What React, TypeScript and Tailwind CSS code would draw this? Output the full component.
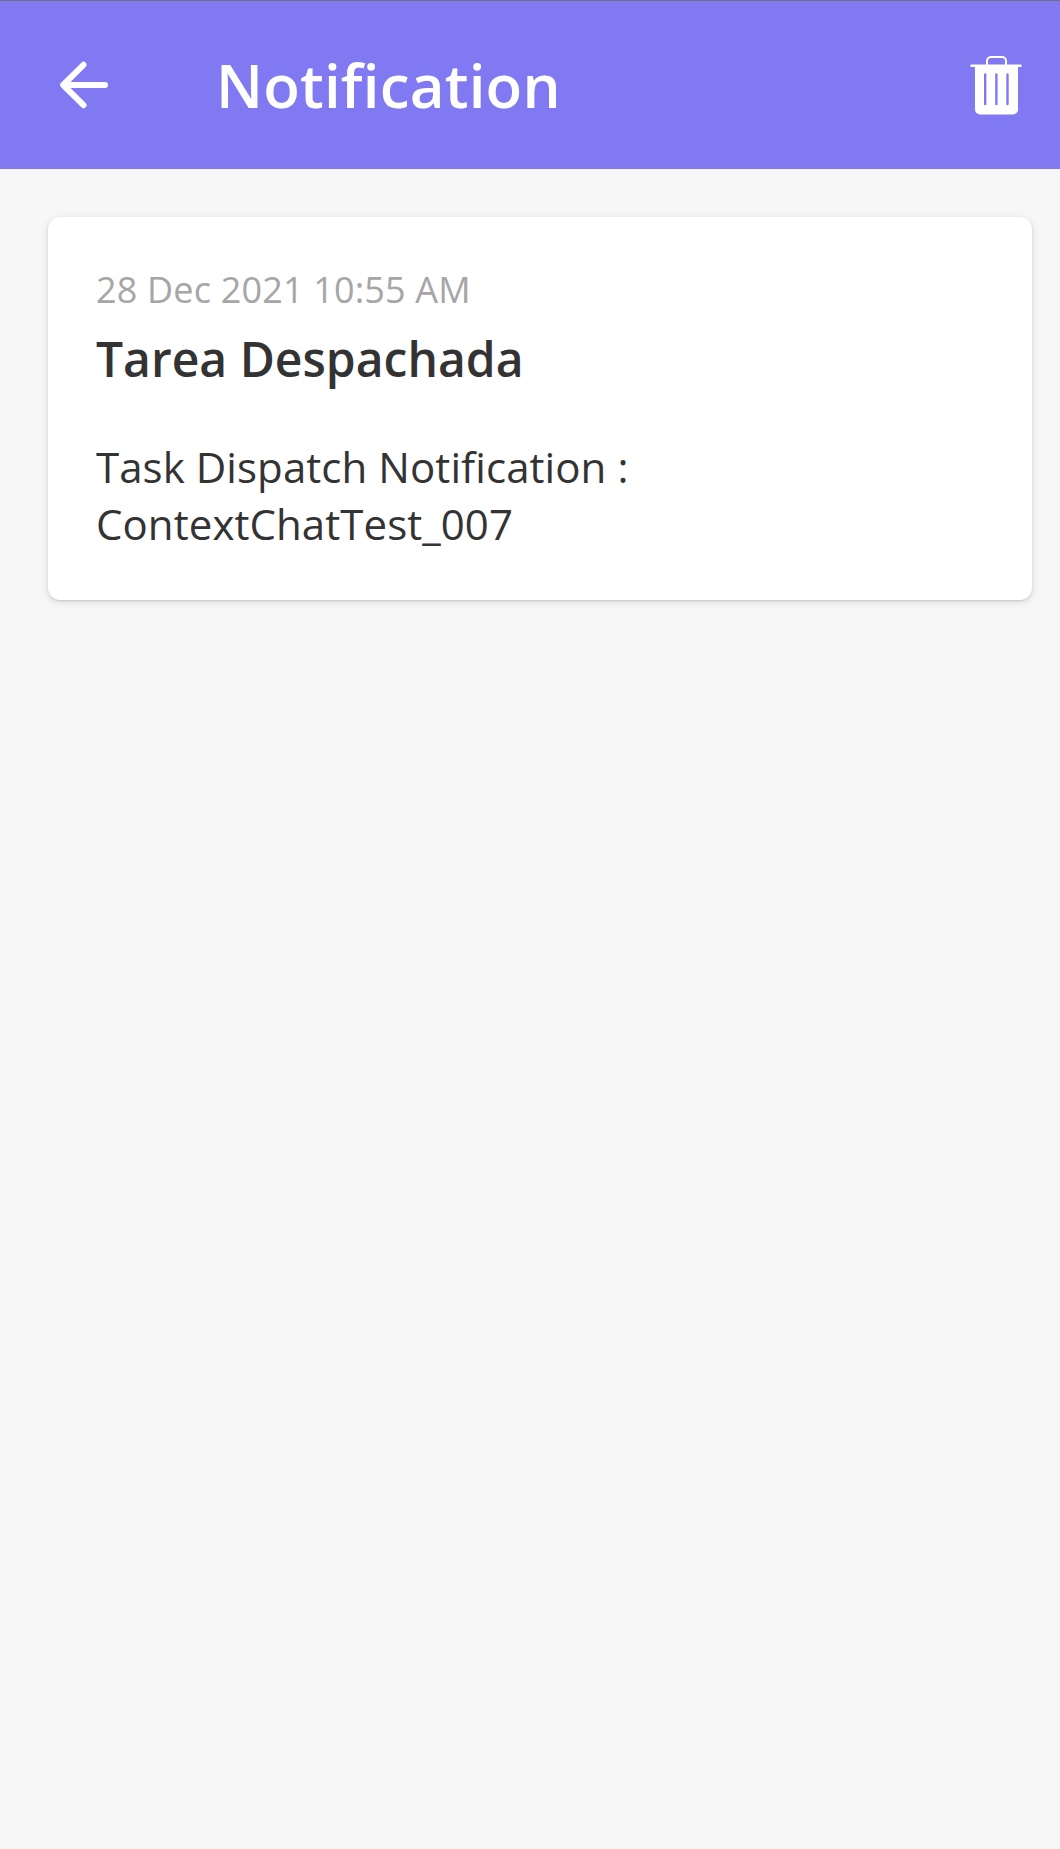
import React from "react";

type NotificationType = {
    date: string;
    title: string;
    message: string;
}

const notifications: NotificationType[] = [
    {
        date: "28 Dec 2021 10:55 AM",
        title: "Tarea Despachada",
        message: "Task Dispatch Notification : ContextChatTest_007",
    },
];

function BackIcon() {
    return (
        <svg width="48" height="48" viewBox="0 0 48 48" fill="none" stroke="currentColor" strokeWidth="6" strokeLinecap="round" strokeLinejoin="round">
            <path d="M23.5 3.8L3.2 24l20.3 20.2M4 24h41" />
        </svg>
    );
}

function TrashIcon() {
    return (
        <svg width="52" height="60" viewBox="0 0 52 60" fill="none">
            <path d="M17 10V6a4 4 0 0 1 4-4h11a4 4 0 0 1 4 4v4" stroke="currentColor" strokeWidth="2" />
            <path d="M.5 9.500h51v2.400h-51z" fill="currentColor" />
            <path
                d="M5 11h43v43.500a5 5 0 0 1-5 5H10a5 5 0 0 1-5-5zM14 19.500a1.200 1.200 0 0 1 2.400 0v29.500a1.200 1.200 0 0 1-2.400 0zM25.200 19.500a1.200 1.200 0 0 1 2.400 0v29.500a1.200 1.200 0 0 1-2.400 0zM36.300 19.500a1.200 1.200 0 0 1 2.400 0v29.500a1.200 1.200 0 0 1-2.400 0z"
                fill="currentColor"
                fillRule="evenodd"
            />
        </svg>
    );
}

function Header() {
    return (
        <header className="flex h-[169px] items-center border-t border-[#706f7c] bg-[#8179f1] pl-[60px] pr-[38px] text-white">
            <button aria-label="Back">
                <BackIcon />
            </button>
            <h1 className="ml-[108px] flex-1 text-[60px] leading-[82px] font-semibold tracking-[0.2px]">Notification</h1>
            <button aria-label="Delete all">
                <TrashIcon />
            </button>
        </header>
    );
}

function NotificationCard({ date, title, message }: NotificationType) {
    return (
        <div className="h-[383px] rounded-xl bg-white px-12 pt-12 shadow-[0_1px_2px_rgba(0,0,0,0.12),0_2px_8px_rgba(0,0,0,0.12)]">
            <p className="text-[36px] leading-[49px] tracking-[0.17px] text-[#a6a6a6]">{date}</p>
            <h2 className="mt-3 text-[48px] leading-[65px] font-semibold text-[#333333]">{title}</h2>
            <p className="mt-[47px] max-w-[640px] text-[42px] leading-[57px] tracking-[0.07px] text-[#333333]">{message}</p>
        </div>
    );
}

export default function App() {
    return (
        <div className="min-h-screen bg-[#f7f7f7] font-['Open_Sans',sans-serif]">
            <Header />
            <main className="flex flex-col gap-6 pt-12 pr-7 pl-12">
                {notifications.map((item) => (
                    <NotificationCard key={item.title} {...item} />
                ))}
            </main>
        </div>
    );
}
